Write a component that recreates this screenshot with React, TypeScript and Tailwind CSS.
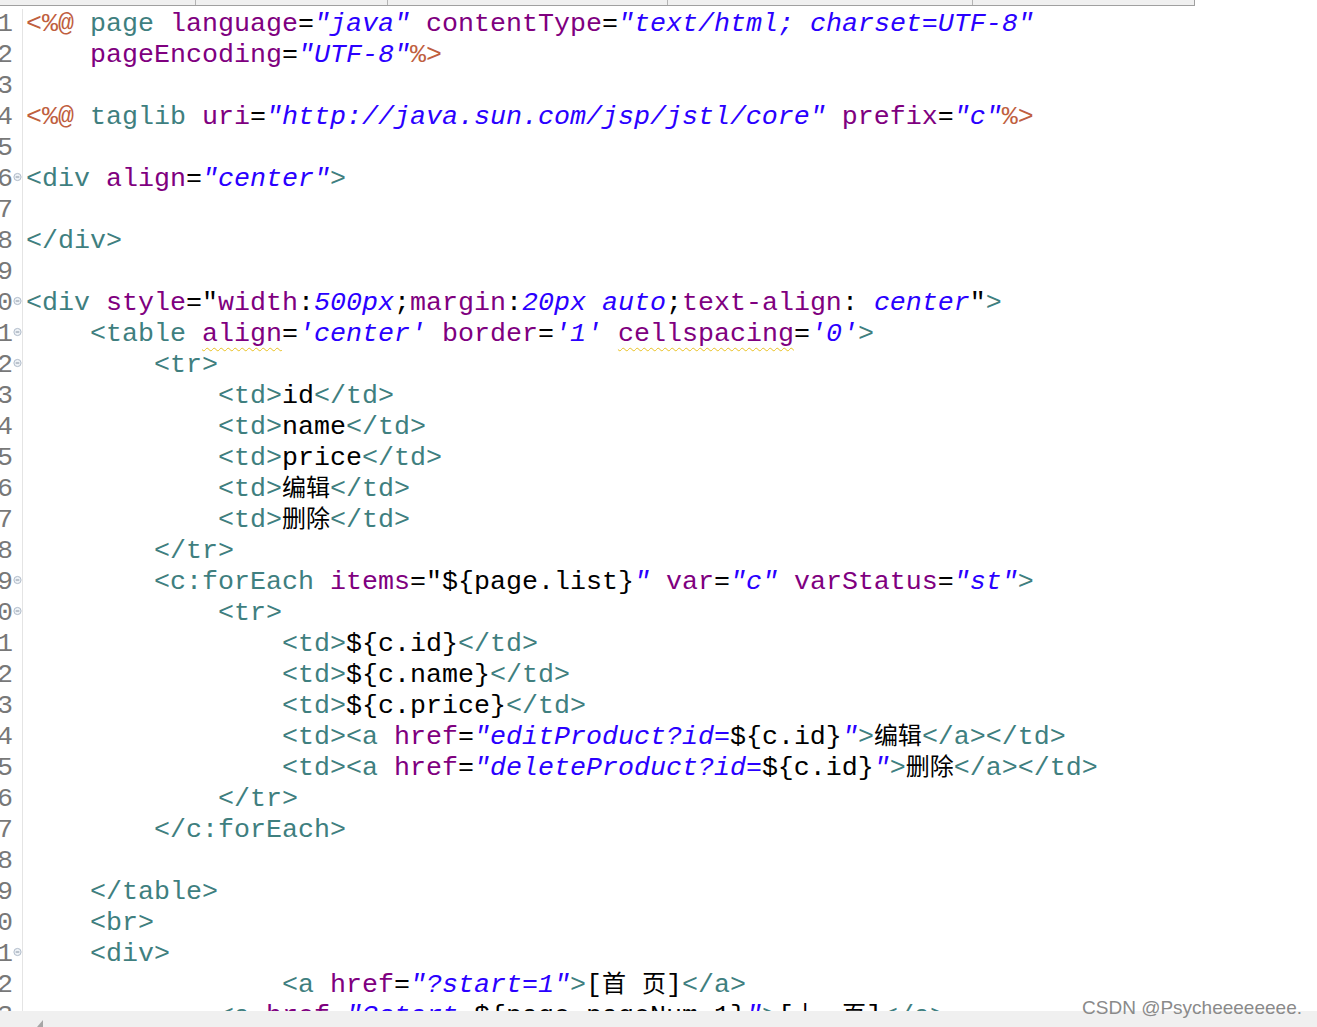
type Kind = "t" | "a" | "v" | "d" | "k" | "w" | "c";
type Seg = [Kind, string];

const styles: Record<Kind, string> = {
    t: "text-[#3f7f7f]",
    a: "text-[#7f007f]",
    v: "text-[#2a00ff] italic",
    d: "text-[#bf5f3f]",
    k: "text-black",
    w: "text-[#7f007f] underline decoration-wavy decoration-[#e8c020] decoration-1 underline-offset-[6px]",
    c: "text-black text-[24px] leading-none font-['Noto_Sans_CJK_SC',sans-serif]",
};

const sp = (n: number): Seg => ["k", " ".repeat(n)];

const lines: Seg[][] = [
    [["d", "<%@"], ["k", " "], ["t", "page"], ["k", " "], ["a", "language"], ["k", "="], ["v", '"java"'], ["k", " "], ["a", "contentType"], ["k", "="], ["v", '"text/html; charset=UTF-8"']],
    [sp(4), ["a", "pageEncoding"], ["k", "="], ["v", '"UTF-8"'], ["d", "%>"]],
    [],
    [["d", "<%@"], ["k", " "], ["t", "taglib"], ["k", " "], ["a", "uri"], ["k", "="], ["v", '"http://java.sun.com/jsp/jstl/core"'], ["k", " "], ["a", "prefix"], ["k", "="], ["v", '"c"'], ["d", "%>"]],
    [],
    [["t", "<div"], ["k", " "], ["a", "align"], ["k", "="], ["v", '"center"'], ["t", ">"]],
    [],
    [["t", "</div>"]],
    [],
    [["t", "<div"], ["k", " "], ["a", "style"], ["k", '="'], ["a", "width"], ["k", ":"], ["v", "500px"], ["k", ";"], ["a", "margin"], ["k", ":"], ["v", "20px auto"], ["k", ";"], ["a", "text-align"], ["k", ": "], ["v", "center"], ["k", '"'], ["t", ">"]],
    [sp(4), ["t", "<table"], ["k", " "], ["w", "align"], ["k", "="], ["v", "'center'"], ["k", " "], ["a", "border"], ["k", "="], ["v", "'1'"], ["k", " "], ["w", "cellspacing"], ["k", "="], ["v", "'0'"], ["t", ">"]],
    [sp(8), ["t", "<tr>"]],
    [sp(12), ["t", "<td>"], ["k", "id"], ["t", "</td>"]],
    [sp(12), ["t", "<td>"], ["k", "name"], ["t", "</td>"]],
    [sp(12), ["t", "<td>"], ["k", "price"], ["t", "</td>"]],
    [sp(12), ["t", "<td>"], ["c", "编辑"], ["t", "</td>"]],
    [sp(12), ["t", "<td>"], ["c", "删除"], ["t", "</td>"]],
    [sp(8), ["t", "</tr>"]],
    [sp(8), ["t", "<c:forEach"], ["k", " "], ["a", "items"], ["k", '="${page.list}'], ["v", '"'], ["k", " "], ["a", "var"], ["k", "="], ["v", '"c"'], ["k", " "], ["a", "varStatus"], ["k", "="], ["v", '"st"'], ["t", ">"]],
    [sp(12), ["t", "<tr>"]],
    [sp(16), ["t", "<td>"], ["k", "${c.id}"], ["t", "</td>"]],
    [sp(16), ["t", "<td>"], ["k", "${c.name}"], ["t", "</td>"]],
    [sp(16), ["t", "<td>"], ["k", "${c.price}"], ["t", "</td>"]],
    [sp(16), ["t", "<td><a"], ["k", " "], ["a", "href"], ["k", "="], ["v", '"editProduct?id='], ["k", "${c.id}"], ["v", '"'], ["t", ">"], ["c", "编辑"], ["t", "</a></td>"]],
    [sp(16), ["t", "<td><a"], ["k", " "], ["a", "href"], ["k", "="], ["v", '"deleteProduct?id='], ["k", "${c.id}"], ["v", '"'], ["t", ">"], ["c", "删除"], ["t", "</a></td>"]],
    [sp(12), ["t", "</tr>"]],
    [sp(8), ["t", "</c:forEach>"]],
    [],
    [sp(4), ["t", "</table>"]],
    [sp(4), ["t", "<br>"]],
    [sp(4), ["t", "<div>"]],
    [sp(16), ["t", "<a"], ["k", " "], ["a", "href"], ["k", "="], ["v", '"?start=1"'], ["t", ">"], ["k", "["], ["c", "首"], ["k", " "], ["c", "页"], ["k", "]"], ["t", "</a>"]],
    [sp(12), ["t", "<a"], ["k", " "], ["a", "href"], ["k", "="], ["v", '"?start='], ["k", "${page.pageNum-1}"], ["v", '"'], ["t", ">"], ["k", "["], ["c", "上一页"], ["k", "]"], ["t", "</a>"]],
];

const folds = new Set([6, 10, 11, 12, 19, 20, 31]);

const FoldMarker = () => (
    <svg width="10" height="10" viewBox="0 0 10 10" className="-mt-[5px]">
        <circle cx="5" cy="5" r="4" fill="#eef2f6" stroke="#a8b4c4" strokeWidth="1" />
        <line x1="3" y1="5" x2="7" y2="5" stroke="#7c8898" strokeWidth="1" />
    </svg>
);

const App = () => {
    return (
        <div className="relative w-[1317px] h-[1027px] bg-white overflow-hidden flex flex-col font-['Liberation_Mono','Noto_Sans_CJK_SC',monospace]">
            {/* tab strip, mostly cut off */}
            <div className="h-[6px] w-[1195px] flex bg-[#f0f0f0] border-b border-r border-[#a0a0a0] shrink-0">
                <div className="w-[196px] border-r border-[#b4b4b4]"></div>
                <div className="w-[192px] border-r border-[#b4b4b4]"></div>
                <div className="w-[280px] border-r border-[#b4b4b4]"></div>
                <div className="w-[305px] border-r border-[#b4b4b4]"></div>
                <div className="flex-1"></div>
            </div>

            <div className="flex-1 overflow-hidden pt-[3px]">
                {lines.map((segs, i) => (
                    <div key={i} className="flex h-[31px] leading-[31px] text-[26.67px]">
                        <div className="w-[13px] shrink-0 overflow-hidden flex justify-end text-[#787878] whitespace-pre">
                            {i + 1}
                        </div>
                        <div className="w-[10px] shrink-0 flex items-center justify-center border-r border-[#e4e4e4]">
                            {folds.has(i + 1) && <FoldMarker />}
                        </div>
                        <div className="pl-[3px] whitespace-pre">
                            {segs.map(([kind, text], j) => (
                                <span key={j} className={styles[kind]}>
                                    {text}
                                </span>
                            ))}
                        </div>
                    </div>
                ))}
            </div>

            {/* horizontal scrollbar */}
            <div className="h-[16px] shrink-0 bg-[#f0f0f0] flex items-end pl-[34px]">
                <svg width="10" height="8" viewBox="0 0 10 8">
                    <polygon points="9,1 9,8 3,8" fill="#a6a6a6" />
                </svg>
            </div>

            <div className="absolute right-[15px] bottom-[9px] text-[19px] leading-[20px] text-[#8a8a8a] font-['Liberation_Sans',sans-serif]">
                CSDN @Psycheeeeeeee.
            </div>
        </div>
    );
};

export default App;
